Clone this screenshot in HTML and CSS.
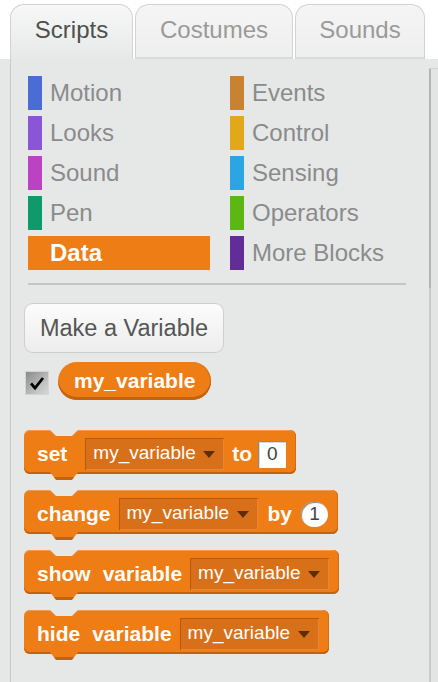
FILE: index.html
```html
<!DOCTYPE html>
<html>
<head>
<meta charset="utf-8">
<link rel="stylesheet" href="styles.css">
</head>
<body>
<div class="tabs">
  <div class="tab tab-scripts active">Scripts</div>
  <div class="tab tab-costumes">Costumes</div>
  <div class="tab tab-sounds">Sounds</div>
</div>
<div class="main">
  <div class="palette">
    <div class="cats">
      <div class="cat"><span class="bar motion"></span>Motion</div>
      <div class="cat"><span class="bar events"></span>Events</div>
      <div class="cat"><span class="bar looks"></span>Looks</div>
      <div class="cat"><span class="bar control"></span>Control</div>
      <div class="cat"><span class="bar sound"></span>Sound</div>
      <div class="cat"><span class="bar sensing"></span>Sensing</div>
      <div class="cat"><span class="bar pen"></span>Pen</div>
      <div class="cat"><span class="bar operators"></span>Operators</div>
      <div class="cat selected"><span class="bar data"></span>Data</div>
      <div class="cat"><span class="bar more"></span>More Blocks</div>
    </div>
    <div class="sep"></div>
    <div class="btn">Make a Variable</div>
    <div class="var-row">
      <span class="check">
        <svg width="22" height="22" viewBox="0 0 22 22"><path d="M5 11.5 L9 16 L17 6" fill="none" stroke="#000" stroke-width="2.8" stroke-linejoin="miter"/></svg>
      </span>
      <span class="reporter">my_variable</span>
    </div>
    <div class="blocks">
      <div class="block">
        <span class="lbl lbl-set">set</span>
        <span class="dd"><span>my_variable</span><span class="tri"></span></span>
        <span class="lbl">to</span>
        <span class="num">0</span>
      </div>
      <div class="block">
        <span class="lbl">change</span>
        <span class="dd"><span>my_variable</span><span class="tri"></span></span>
        <span class="lbl lbl-by">by</span>
        <span class="num round">1</span>
      </div>
      <div class="block">
        <span class="lbl lbl-word">show</span>
        <span class="lbl">variable</span>
        <span class="dd"><span>my_variable</span><span class="tri"></span></span>
      </div>
      <div class="block">
        <span class="lbl lbl-word">hide</span>
        <span class="lbl">variable</span>
        <span class="dd"><span>my_variable</span><span class="tri"></span></span>
      </div>
    </div>
  </div>
  <div class="scripts"></div>
</div>
</body>
</html>
```
FILE: styles.css
```css
* { box-sizing: border-box; }
html, body { margin: 0; padding: 0; }
body {
  width: 438px;
  height: 682px;
  overflow: hidden;
  background: #ffffff;
  font-family: "Liberation Sans", Arial, sans-serif;
}
.tabs {
  display: flex;
  gap: 2px;
  padding: 4px 0 0 10px;
  height: 59px;
}
.tab {
  height: 55px;
  border: 1px solid #d2d2d2;
  border-bottom: none;
  border-radius: 14px 14px 0 0;
  background: linear-gradient(#f5f5f5, #eeeeee);
  box-shadow: inset 0 -2px 0 #dadada;
  color: #9a9a9a;
  font-size: 24px;
  line-height: 50px;
  text-align: center;
}
.tab-scripts { width: 123px; }
.tab-costumes { width: 158px; }
.tab-sounds { width: 130px; }
.tab.active {
  background: linear-gradient(#f7f7f7, #e7e9e9);
  box-shadow: none;
  color: #4f4f4f;
}
.main {
  display: flex;
  height: 623px;
  background: #e6e8e8;
  padding-left: 10px;
}
.palette {
  width: 419px;
  border-left: 1px solid #c9c9c9;
  padding-left: 13px;
}
.cats {
  margin: 17px 0 0 4px;
  display: grid;
  grid-template-columns: 182px 182px;
  column-gap: 20px;
  row-gap: 6px;
}
.cat {
  height: 34px;
  display: flex;
  align-items: center;
  font-size: 24px;
  color: #8b8b8b;
}
.bar {
  width: 14px;
  height: 34px;
  margin-right: 8px;
}
.motion { background: #4a6cd4; }
.looks { background: #8a55d7; }
.sound { background: #bb42c3; }
.pen { background: #0e9a6c; }
.data { background: #ee7d16; }
.events { background: #c88330; }
.control { background: #e1a91a; }
.sensing { background: #2ca5e2; }
.operators { background: #5cb712; }
.more { background: #632d99; }
.cat.selected {
  background: #ee7d16;
  color: #ffffff;
  font-weight: bold;
}
.sep {
  margin: 13px 0 0 4px;
  width: 378px;
  height: 2px;
  background: #c4c6c6;
}
.btn {
  margin-top: 18px;
  width: 200px;
  height: 50px;
  border: 1px solid #cfcfcf;
  border-radius: 9px;
  background: linear-gradient(#fcfcfc, #ededed);
  color: #555555;
  font-size: 23.5px;
  display: flex;
  align-items: center;
  justify-content: center;
}
.var-row {
  margin-top: 9px;
  height: 38px;
  display: flex;
  align-items: center;
  gap: 9px;
}
.check {
  margin-left: 1px;
  margin-top: 4px;
  width: 24px;
  height: 24px;
  border: 1px solid #d4d4d4;
  background: linear-gradient(135deg, #8a8a8a, #c4c4c4 70%, #d6d6d6);
  display: flex;
  align-items: center;
  justify-content: center;
}
.reporter {
  height: 38px;
  padding: 0 16px;
  border-radius: 19px;
  background: #ee7d16;
  box-shadow: inset 0 -3px 0 #c4620f, inset -1px 0 0 #d46d14;
  color: #ffffff;
  font-weight: bold;
  font-size: 21px;
  display: flex;
  align-items: center;
  padding-bottom: 1px;
}
.blocks {
  margin-top: 30px;
  display: flex;
  flex-direction: column;
  align-items: flex-start;
  gap: 16px;
}
.block {
  position: relative;
  height: 44px;
  padding: 8px 10px 4px 13px;
  display: flex;
  align-items: center;
  gap: 8px;
  background: #ee7d16;
  border-radius: 6px;
  box-shadow: inset 0 -2px 0 #c4620f, inset -1px 0 0 #d46d14, inset 0 1px 0 #f39a4c;
}
.block::before {
  content: "";
  position: absolute;
  top: 0;
  left: 26px;
  width: 28px;
  height: 6px;
  background: #e6e8e8;
  clip-path: polygon(0 0, 100% 0, calc(100% - 6px) 100%, 6px 100%);
}
.block::after {
  content: "";
  position: absolute;
  bottom: -6px;
  left: 26px;
  width: 28px;
  height: 8px;
  background: linear-gradient(#ee7d16 0 5px, #c4620f 5px);
  clip-path: polygon(0 0, 100% 0, calc(100% - 6px) 100%, 6px 100%);
}
.lbl {
  color: #ffffff;
  font-weight: bold;
  font-size: 21px;
  line-height: 24px;
}
.lbl-set { margin-right: 10px; }
.lbl-word { margin-right: 4px; }
.lbl-by { margin-left: 2px; }
.dd {
  height: 32px;
  width: 139px;
  padding: 0 8px 0 8px;
  display: flex;
  align-items: center;
  justify-content: space-between;
  background: #d8701a;
  box-shadow: inset 1px 1px 0 #b55a10, inset -1px -1px 0 #e48833;
  color: #ffffff;
  font-size: 19px;
}
.dd span:first-child { padding-bottom: 3px; }
.tri {
  width: 0;
  height: 0;
  border-left: 6px solid transparent;
  border-right: 6px solid transparent;
  border-top: 7px solid #5c2f0a;
  margin-right: 1px;
}
.num {
  width: 28px;
  height: 27px;
  background: #ffffff;
  box-shadow: inset 1px 1px 0 #8a8a8a, inset 2px 2px 0 #d8d8d8;
  color: #444444;
  font-size: 19px;
  display: flex;
  align-items: center;
  justify-content: center;
  margin-left: -2px;
}
.num.round {
  width: 27px;
  height: 25px;
  border-radius: 13px;
  margin-left: 1px;
  box-shadow: inset 1px 1px 1px #888888;
}
.scripts {
  flex: 1;
  margin-top: 9px;
  background: #e3e5e5;
  border-left: 2px solid #cbcbcb;
  border-top: 1px solid #d2d2d2;
  position: relative;
}
.scripts::before {
  content: "";
  position: absolute;
  left: -2px;
  top: 0;
  width: 2px;
  height: 219px;
  background: #b4b4b4;
}
```
